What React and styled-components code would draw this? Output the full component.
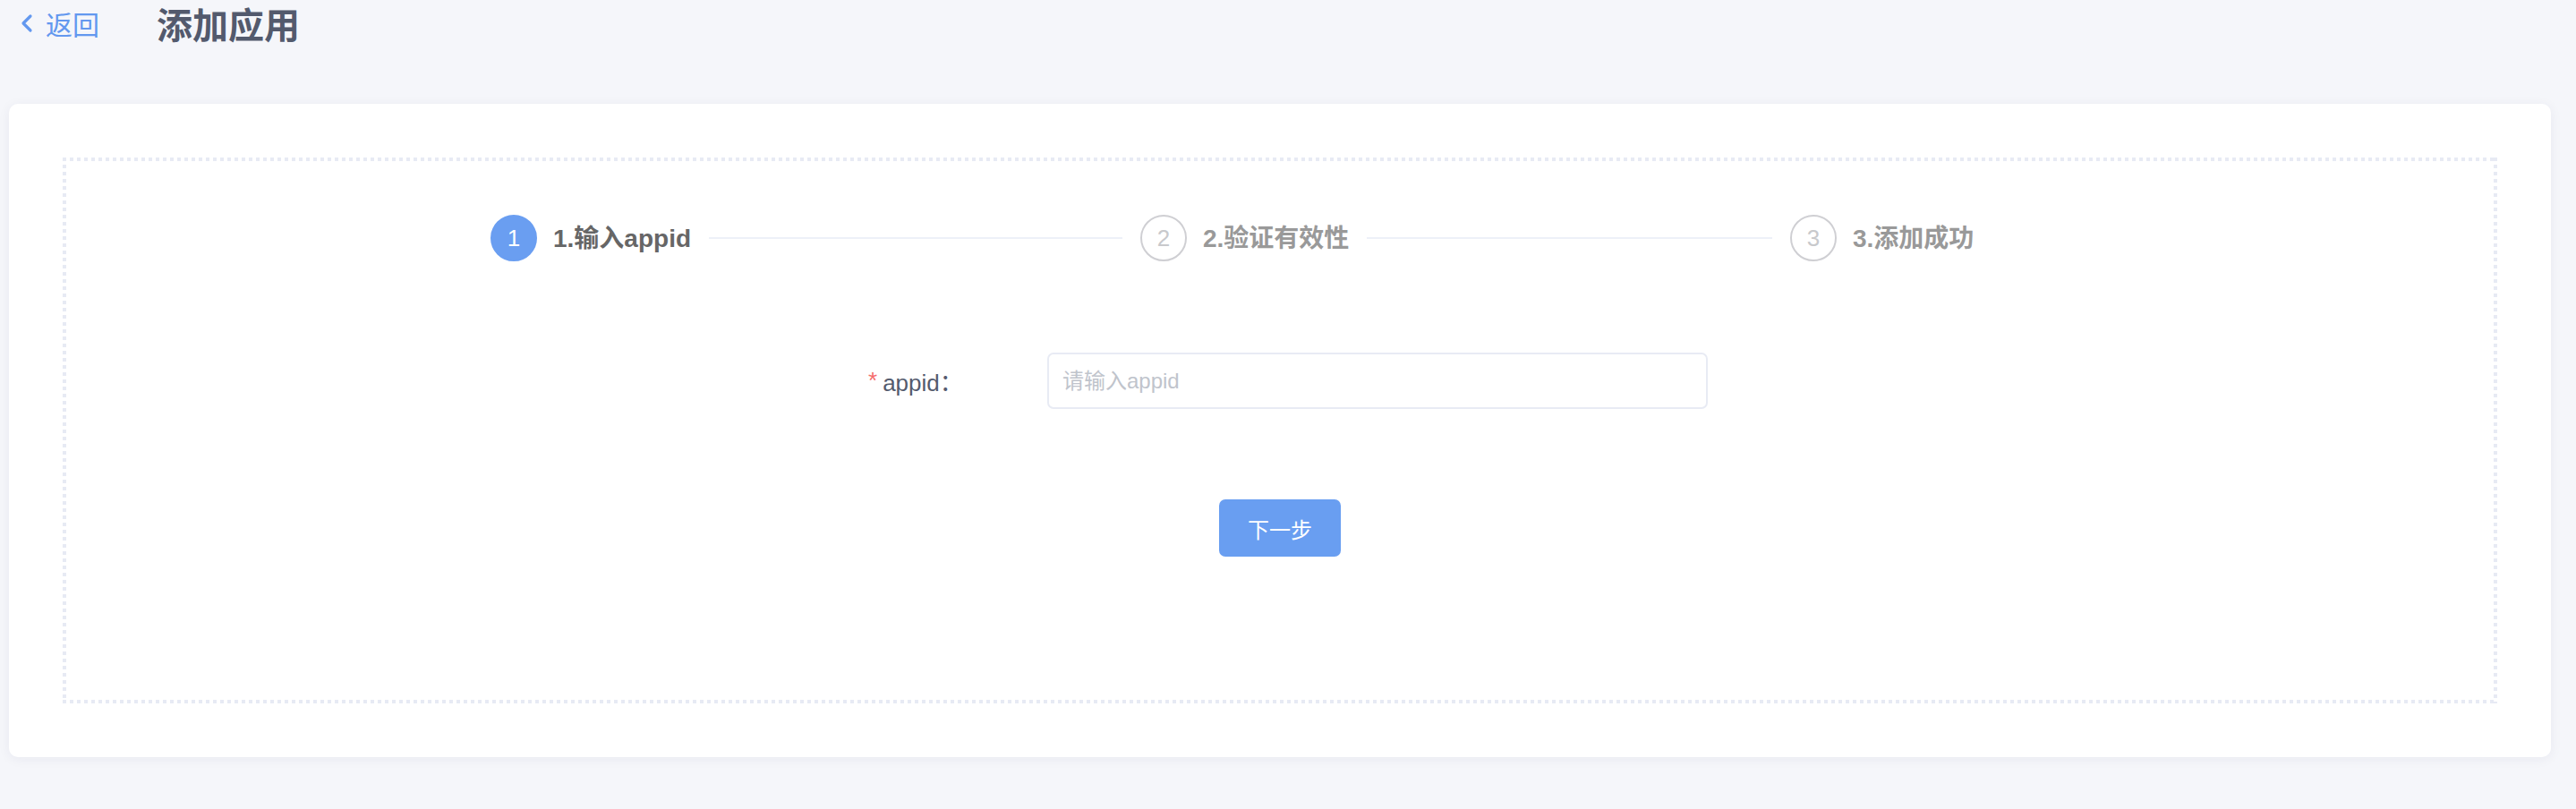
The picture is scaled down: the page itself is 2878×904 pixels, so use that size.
import React from 'react';
import styled, { createGlobalStyle } from 'styled-components';

const GlobalStyle = createGlobalStyle`
  html, body {
    margin: 0;
    padding: 0;
    background: #f5f6fa;
    font-family: "Liberation Sans", "Noto Sans CJK SC", sans-serif;
  }
  * {
    box-sizing: border-box;
  }
`;

const Page = styled.div`
  min-height: 904px;
  background: #f5f6fa;
`;

const Header = styled.div`
  height: 52px;
  display: flex;
  align-items: center;
  padding-left: 22px;
`;

const BackLink = styled.a`
  display: flex;
  align-items: center;
  gap: 13px;
  color: #6398ef;
  font-size: 30px;
  text-decoration: none;
  cursor: pointer;
  margin-right: 64px;
`;

const Title = styled.h1`
  margin: 0;
  font-size: 40px;
  font-weight: 700;
  color: #535a6d;
`;

const Card = styled.div`
  margin: 64px 28px 0 10px;
  padding: 60px;
  background: #fff;
  border-radius: 10px;
  box-shadow: 0 2px 14px rgba(30, 40, 80, 0.06);
`;

const dash = '#e7eaf4';

const DashedBox = styled.div`
  padding: 64px 4px 164px;
  background:
    repeating-linear-gradient(to right, ${dash} 0 4px, transparent 4px 8px) top left / 100% 4px no-repeat,
    repeating-linear-gradient(to right, ${dash} 0 4px, transparent 4px 8px) bottom left / 100% 4px no-repeat,
    repeating-linear-gradient(to bottom, ${dash} 0 4px, transparent 4px 8px) top left / 4px 100% no-repeat,
    repeating-linear-gradient(to bottom, ${dash} 0 4px, transparent 4px 8px) top right / 4px 100% no-repeat;
`;

const Steps = styled.div`
  display: flex;
  align-items: center;
  margin-left: 474px;
  height: 52px;
`;

const Step = styled.div`
  display: flex;
  align-items: center;
  flex: ${(p) => (p.$last ? '0 0 auto' : '0 0 726px')};
`;

const StepCircle = styled.div`
  width: 52px;
  height: 52px;
  border-radius: 50%;
  display: flex;
  align-items: center;
  justify-content: center;
  font-size: 26px;
  flex-shrink: 0;
  background: ${(p) => (p.$active ? '#6a9ef1' : '#fff')};
  border: 2px solid ${(p) => (p.$active ? '#6a9ef1' : '#cfcfd3')};
  color: ${(p) => (p.$active ? '#fff' : '#c8c9cc')};
`;

const StepTitle = styled.span`
  margin-left: 18px;
  padding-bottom: 5px;
  font-size: 28px;
  font-weight: 700;
  color: ${(p) => (p.$active ? '#666666' : '#999999')};
  white-space: nowrap;
`;

const StepLine = styled.div`
  flex: 1;
  height: 2px;
  margin: 0 20px;
  background: #edf0f8;
`;

const FormRow = styled.div`
  margin: 102px auto 0;
  width: 956px;
  padding-left: 16px;
  display: flex;
  align-items: center;
`;

const Label = styled.label`
  width: 202px;
  padding-left: 2px;
  font-size: 26px;
  color: #545b6e;
  display: flex;
  align-items: center;
`;

const Required = styled.span`
  color: #f56c6c;
  margin-right: 6px;
`;

const Input = styled.input`
  width: 738px;
  height: 63px;
  padding: 0 15px;
  border: 2px solid #e8ebf4;
  border-radius: 7px;
  font-size: 24px;
  font-family: inherit;
  color: #606266;
  outline: none;
  &::placeholder {
    color: #c0c4cc;
  }
`;

const Actions = styled.div`
  margin-top: 101px;
  display: flex;
  justify-content: center;
`;

const Button = styled.button`
  width: 136px;
  height: 64px;
  border: none;
  border-radius: 7px;
  background: #699ef1;
  color: #fff;
  font-size: 24px;
  font-family: inherit;
  cursor: pointer;
`;

const steps = ['1.输入appid', '2.验证有效性', '3.添加成功'];

function ChevronLeft() {
  return (
    <svg width="16" height="22" viewBox="0 0 16 22">
      <path d="M12 3 L4 11 L12 19" fill="none" stroke="#6398ef" strokeWidth="3.2" strokeLinecap="round" strokeLinejoin="round" />
    </svg>
  );
}

export default function App() {
  const current = 0;
  return (
    <Page>
      <GlobalStyle />
      <Header>
        <BackLink>
          <ChevronLeft />
          返回
        </BackLink>
        <Title>添加应用</Title>
      </Header>
      <Card>
        <DashedBox>
          <Steps>
            {steps.map((title, i) => {
              const last = i === steps.length - 1;
              return (
                <Step key={title} $last={last}>
                  <StepCircle $active={i === current}>{i + 1}</StepCircle>
                  <StepTitle $active={i === current}>{title}</StepTitle>
                  {!last && <StepLine />}
                </Step>
              );
            })}
          </Steps>
          <FormRow>
            <Label>
              <Required>*</Required>
              appid：
            </Label>
            <Input placeholder="请输入appid" />
          </FormRow>
          <Actions>
            <Button>下一步</Button>
          </Actions>
        </DashedBox>
      </Card>
    </Page>
  );
}
